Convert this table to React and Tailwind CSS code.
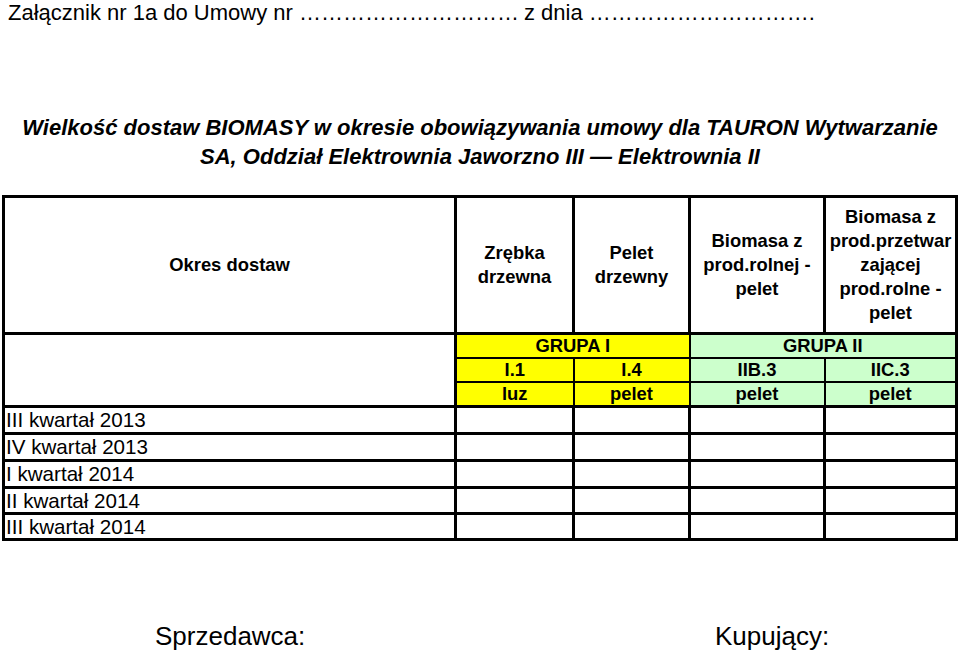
export default function App() {
  const font = { fontFamily: '"Liberation Sans", Arial, sans-serif' };
  const hdr = "border-[3px] border-black text-center align-middle font-bold text-[18.4px] leading-[24px] p-0";
  const yel = "border-2 border-black bg-[#ffff00] text-center align-middle font-bold text-[18.4px] leading-[20px] p-0";
  const grn = "border-2 border-black bg-[#ccffcc] text-center align-middle font-bold text-[18.4px] leading-[20px] p-0";
  const cell = "border-[3px] border-black p-0";
  const lbl = "border-[3px] border-black pl-[1px] text-[20.6px] leading-[22px] align-middle whitespace-nowrap";
  const rows = [
    ["III kwartał 2013", "h-[27px]"],
    ["IV kwartał 2013", "h-[27px]"],
    ["I kwartał 2014", "h-[27px]"],
    ["II kwartał 2014", "h-[26px]"],
    ["III kwartał 2014", "h-[26px]"],
  ];
  const dots = "\u2026".repeat(10);
  return (
    <div className="w-[960px] h-[652px] bg-white text-black overflow-hidden" style={font}>
      <div className="pl-[8px] text-[22px] leading-[25px] whitespace-nowrap">
        Załącznik nr 1a do Umowy nr {dots}
        <span className="ml-[5px]">z dnia {dots}.</span>
      </div>
      <div className="mt-[88px] text-center font-bold italic text-[22px] leading-[29px] whitespace-nowrap">
        Wielkość dostaw BIOMASY w okresie obowiązywania umowy dla TAURON Wytwarzanie
        <br />
        SA, Oddział Elektrownia Jaworzno III — Elektrownia II
      </div>
      <table className="ml-[2px] mt-[24px] w-[956px] border-collapse table-fixed border-[3px] border-black">
        <colgroup>
          <col className="w-[452px]" />
          <col className="w-[118px]" />
          <col className="w-[116px]" />
          <col className="w-[135px]" />
          <col className="w-[132px]" />
        </colgroup>
        <tbody>
          <tr className="h-[137px]">
            <td className={hdr}>Okres dostaw</td>
            <td className={hdr}>Zrębka<br />drzewna</td>
            <td className={hdr}>Pelet<br />drzewny</td>
            <td className={hdr}>Biomasa z<br />prod.rolnej -<br />pelet</td>
            <td className={hdr}>Biomasa z<br />prod.przetwar<br />zającej<br />prod.rolne -<br />pelet</td>
          </tr>
          <tr className="h-[24px]">
            <td className={cell} rowSpan={3}></td>
            <td className={yel} colSpan={2}>GRUPA I</td>
            <td className={grn} colSpan={2}>GRUPA II</td>
          </tr>
          <tr className="h-[24px]">
            <td className={yel}>I.1</td>
            <td className={yel}>I.4</td>
            <td className={grn}>IIB.3</td>
            <td className={grn}>IIC.3</td>
          </tr>
          <tr className="h-[25px]">
            <td className={yel}>luz</td>
            <td className={yel}>pelet</td>
            <td className={grn}>pelet</td>
            <td className={grn}>pelet</td>
          </tr>
          {rows.map(([t, h]) => (
            <tr key={t} className={h}>
              <td className={lbl}>{t}</td>
              <td className={cell}></td>
              <td className={cell}></td>
              <td className={cell}></td>
              <td className={cell}></td>
            </tr>
          ))}
        </tbody>
      </table>
      <div className="flex mt-[80px] text-[26px] leading-[30px] whitespace-nowrap">
        <span className="ml-[155px] w-[560px]">Sprzedawca:</span>
        <span>Kupujący:</span>
      </div>
    </div>
  );
}
